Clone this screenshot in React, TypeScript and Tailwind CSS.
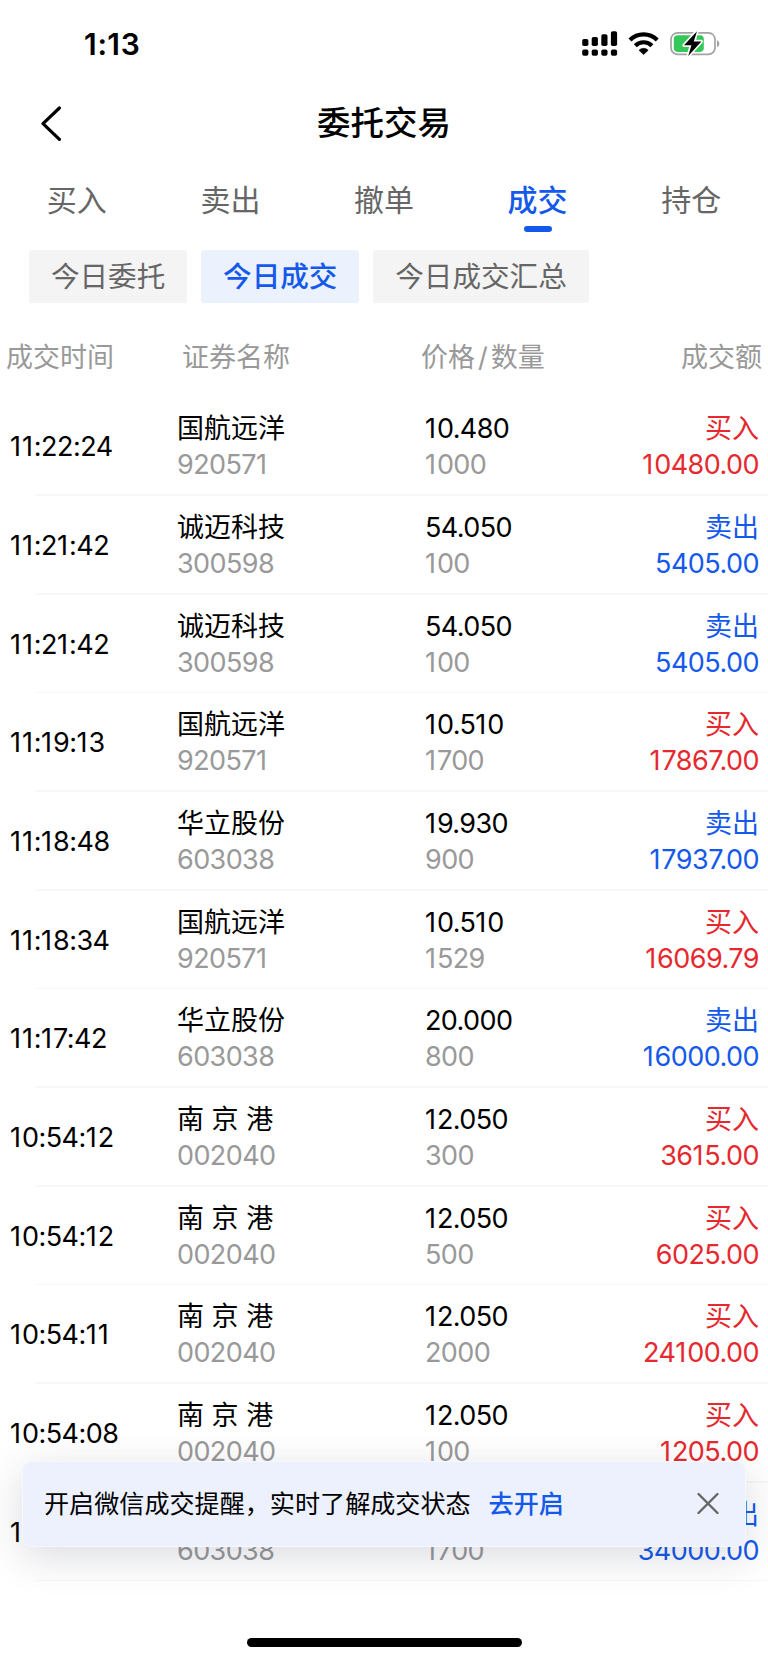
import React from "react";

type Side = "buy" | "sell";

interface Trade {
  time: string;
  name: string;
  code: string;
  price: string;
  quantity: string;
  side: Side;
  amount: string;
}

const TABS = ["买入", "卖出", "撤单", "成交", "持仓"];
const ACTIVE_TAB = "成交";

const FILTERS = ["今日委托", "今日成交", "今日成交汇总"];
const ACTIVE_FILTER = "今日成交";

const TRADES: Trade[] = [
  { time: "11:22:24", name: "国航远洋", code: "920571", price: "10.480", quantity: "1000", side: "buy", amount: "10480.00" },
  { time: "11:21:42", name: "诚迈科技", code: "300598", price: "54.050", quantity: "100", side: "sell", amount: "5405.00" },
  { time: "11:21:42", name: "诚迈科技", code: "300598", price: "54.050", quantity: "100", side: "sell", amount: "5405.00" },
  { time: "11:19:13", name: "国航远洋", code: "920571", price: "10.510", quantity: "1700", side: "buy", amount: "17867.00" },
  { time: "11:18:48", name: "华立股份", code: "603038", price: "19.930", quantity: "900", side: "sell", amount: "17937.00" },
  { time: "11:18:34", name: "国航远洋", code: "920571", price: "10.510", quantity: "1529", side: "buy", amount: "16069.79" },
  { time: "11:17:42", name: "华立股份", code: "603038", price: "20.000", quantity: "800", side: "sell", amount: "16000.00" },
  { time: "10:54:12", name: "南 京 港", code: "002040", price: "12.050", quantity: "300", side: "buy", amount: "3615.00" },
  { time: "10:54:12", name: "南 京 港", code: "002040", price: "12.050", quantity: "500", side: "buy", amount: "6025.00" },
  { time: "10:54:11", name: "南 京 港", code: "002040", price: "12.050", quantity: "2000", side: "buy", amount: "24100.00" },
  { time: "10:54:08", name: "南 京 港", code: "002040", price: "12.050", quantity: "100", side: "buy", amount: "1205.00" },
  { time: "10:53:37", name: "华立股份", code: "603038", price: "20.000", quantity: "1700", side: "sell", amount: "34000.00" },
];

/**
 * Inter's "1" is narrow, so it gets a little more room than the other digits
 */
function Digits({ value }: Readonly<{ value: string }>) {
  return (
    <>
      {value.split(/(1)/).map((part, index) =>
        part === "1" ? (
          <span key={index} className="tracking-[0.9px]">
            1
          </span>
        ) : (
          part
        ),
      )}
    </>
  );
}

function StatusBar() {
  return (
    <div className="flex h-[88px] items-start justify-between pl-[84px] pr-[47px] pt-[26px]">
      <span className="text-[30px] font-semibold leading-[36px]">
        <Digits value="1:13" />
      </span>
      <svg className="mt-[2px] h-8 w-[140px]" viewBox="0 0 140 32" fill="none">
        {/* Dual SIM signal */}
        <g fill="#000">
          <rect x="1.2" y="11" width="6.2" height="7" rx="1.8" />
          <rect x="10.7" y="9" width="6.2" height="9" rx="1.8" />
          <rect x="20.3" y="6.2" width="6.2" height="11.8" rx="1.8" />
          <rect x="29.9" y="3.2" width="6.2" height="14.8" rx="1.8" />
          <rect x="1.2" y="21.4" width="6.2" height="6.3" rx="1.8" />
          <rect x="10.7" y="21.4" width="6.2" height="6.3" rx="1.8" />
          <rect x="20.3" y="21.4" width="6.2" height="6.3" rx="1.8" />
          <rect x="29.9" y="21.4" width="6.2" height="6.3" rx="1.8" />
        </g>
        {/* Wi-Fi */}
        <g stroke="#000" strokeWidth="4.2">
          <path d="M49 12.1a19.2 19.2 0 0 1 27.2 0" />
          <path d="M54.3 17.7a11.7 11.7 0 0 1 16.6 0" />
        </g>
        <path
          d="M62.6 26.6l-4.6-4.4a6.6 6.6 0 0 1 9.2 0z"
          fill="#000"
          stroke="#000"
          strokeWidth="0.6"
          strokeLinejoin="round"
        />
        {/* Battery */}
        <rect x="90" y="4.8" width="44" height="21.6" rx="6.6" stroke="#a3a3a3" strokeWidth="1.7" />
        <path d="M136 12.2c3.1 1.2 3.1 5.6 0 6.8z" fill="#a3a3a3" />
        <rect x="92.8" y="7.3" width="30" height="16.6" rx="3.8" fill="#34c759" />
        <path
          d="M116 3.2l-13 14.1h7.4l-3.2 10.6 13.2-14.5h-7.6z"
          fill="#000"
          stroke="#fff"
          strokeWidth="3.4"
          strokeLinejoin="round"
          paintOrder="stroke"
        />
      </svg>
    </div>
  );
}

function TitleBar() {
  return (
    <header className="grid h-[70px] grid-cols-[100px_1fr_100px] items-center">
      <button type="button" aria-label="返回" className="pl-[38.5px]">
        <svg className="h-9 w-6" viewBox="0 0 24 36" fill="none">
          <path
            d="M20.4 3L4 18.6l16.4 15.8"
            stroke="#000"
            strokeWidth="3.2"
            strokeLinecap="round"
            strokeLinejoin="round"
          />
        </svg>
      </button>
      <h1 className="text-center text-[33.5px] font-medium leading-[44px]">委托交易</h1>
    </header>
  );
}

function TabBar() {
  return (
    <nav className="grid h-[78px] grid-cols-5 pt-[20px]">
      {TABS.map((tab) => {
        const active = tab === ACTIVE_TAB;
        return (
          <div key={tab} className="flex flex-col items-center">
            <span
              className={`text-[30px] leading-[44px] ${
                active ? "font-medium text-[#1459eb]" : "text-[#666666]"
              }`}
            >
              {tab}
            </span>
            {active && <span className="mt-[4px] h-[6px] w-[28px] rounded-full bg-[#1459eb]" />}
          </div>
        );
      })}
    </nav>
  );
}

function Filters() {
  return (
    <div className="flex gap-[14px] pl-[29px] pt-[14px]">
      {FILTERS.map((filter) => (
        <button
          key={filter}
          type="button"
          className={`h-[53px] rounded-[3px] px-[21.9px] text-[28.6px] leading-[53px] ${
            filter === ACTIVE_FILTER
              ? "bg-[#ecf1fe] font-medium text-[#1459eb]"
              : "bg-[#f4f4f4] text-[#666666]"
          }`}
        >
          {filter}
        </button>
      ))}
    </div>
  );
}

function TradeRow({ trade }: Readonly<{ trade: Trade }>) {
  const sideColor = trade.side === "buy" ? "text-[#e6292f]" : "text-[#1459eb]";

  return (
    <li className="h-[98.66px]">
      <div className="grid h-[97.16px] grid-cols-[167px_248px_1fr] pl-[10px] pr-[9px] pt-[14px] text-[27px] leading-[36px]">
        <span className="pt-[18px] tracking-[-0.5px]">
          <Digits value={trade.time} />
        </span>
        <div>
          <p>{trade.name}</p>
          <p className="tracking-[-0.6px] text-[#999999]">
            <Digits value={trade.code} />
          </p>
        </div>
        <div className="flex justify-between">
          <div className="tracking-[-0.6px]">
            <p>
              <Digits value={trade.price} />
            </p>
            <p className="text-[#999999]">
              <Digits value={trade.quantity} />
            </p>
          </div>
          <div className={`text-right ${sideColor}`}>
            <p>{trade.side === "buy" ? "买入" : "卖出"}</p>
            <p className="tracking-[-0.55px]">
              <Digits value={trade.amount} />
            </p>
          </div>
        </div>
      </div>
      <div className="ml-[36px] h-[1.5px] bg-[#f7f7f7]" />
    </li>
  );
}

function ReminderBanner() {
  return (
    <div className="absolute left-[22px] top-[1461px] flex h-[86px] w-[724px] items-center rounded-[10px] border border-[#f6f8fe] bg-[#ecf1fd] pl-[21px] pr-[25.5px] text-[25.1px] leading-[36px] shadow-[0_10px_40px_rgba(30,40,70,0.16)]">
      <span>开启微信成交提醒，实时了解成交状态</span>
      <a className="ml-[18px] font-medium text-[#1459eb]">去开启</a>
      <button type="button" aria-label="关闭" className="ml-auto">
        <svg className="h-6 w-6" viewBox="0 0 24 24" fill="none">
          <path
            d="M2.5 2L21.5 21M21.5 2L2.5 21"
            stroke="#666"
            strokeWidth="2.4"
            strokeLinecap="round"
          />
        </svg>
      </button>
    </div>
  );
}

export default function App() {
  return (
    <div
      lang="zh-CN"
      className="relative flex h-[1662px] w-[768px] flex-col overflow-hidden bg-white font-['Inter','Noto_Sans_CJK_SC',sans-serif] text-black"
    >
      <StatusBar />
      <TitleBar />
      <TabBar />
      <Filters />

      <div className="grid h-[94.3px] grid-cols-[176px_239px_1fr_auto] pl-[6px] pr-[6px] pt-[37px] text-[27px] leading-[36px] text-[#999999]">
        <span>成交时间</span>
        <span>证券名称</span>
        <span>
          价格<span className="mx-[3px]">/</span>数量
        </span>
        <span>成交额</span>
      </div>

      <ul>
        {TRADES.map((trade, index) => (
          <TradeRow key={index} trade={trade} />
        ))}
      </ul>

      <div className="mx-auto mb-[15px] mt-auto h-[9px] w-[275px] rounded-full bg-black" />

      <ReminderBanner />
    </div>
  );
}
